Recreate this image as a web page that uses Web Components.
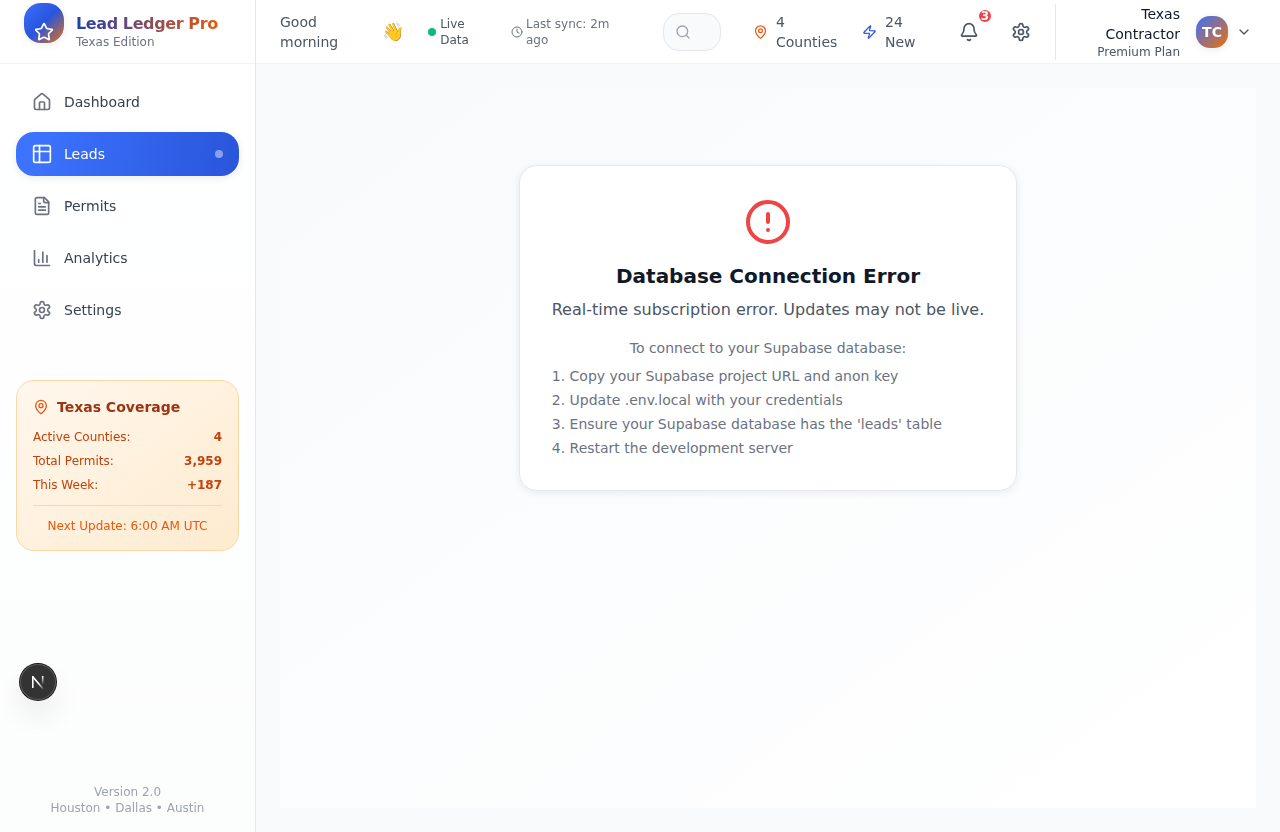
<!DOCTYPE html>
<html lang="en">
<head>
<meta charset="utf-8">
<title>Lead Ledger Pro</title>
<style>
html,body{margin:0;height:100%}
body{font-family:"DejaVu Sans",sans-serif;font-size:14px;line-height:20px;color:#374151;background:#f8fafc;overflow:hidden}
</style>
</head>
<body>
<ledger-app></ledger-app>
<script>
const ICONS = {
  star:'<path d="M11.525 2.295a.53.53 0 0 1 .95 0l2.31 4.679a2.123 2.123 0 0 0 1.595 1.16l5.166.756a.53.53 0 0 1 .294.904l-3.736 3.638a2.123 2.123 0 0 0-.611 1.878l.882 5.14a.53.53 0 0 1-.771.56l-4.618-2.428a2.122 2.122 0 0 0-1.973 0L6.396 21.01a.53.53 0 0 1-.77-.56l.881-5.139a2.122 2.122 0 0 0-.611-1.879L2.16 9.795a.53.53 0 0 1 .294-.906l5.165-.755a2.122 2.122 0 0 0 1.597-1.16z"/>',
  house:'<path d="M15 21v-8a1 1 0 0 0-1-1h-4a1 1 0 0 0-1 1v8"/><path d="M3 10a2 2 0 0 1 .709-1.528l7-5.999a2 2 0 0 1 2.582 0l7 5.999A2 2 0 0 1 21 10v9a2 2 0 0 1-2 2H5a2 2 0 0 1-2-2z"/>',
  table:'<rect width="20" height="20" x="2" y="2" rx="2"/><path d="M2 9h20M9 2v20"/>',
  file:'<path d="M15 2H6a2 2 0 0 0-2 2v16a2 2 0 0 0 2 2h12a2 2 0 0 0 2-2V7Z"/><path d="M14 2v4a2 2 0 0 0 2 2h4M10 9H8M16 13H8M16 17H8"/>',
  chart:'<path d="M3 3v16a2 2 0 0 0 2 2h16M18 17V9M13 17V5M8 17v-3"/>',
  gear:'<path d="M12.22 2h-.44a2 2 0 0 0-2 2v.18a2 2 0 0 1-1 1.73l-.43.25a2 2 0 0 1-2 0l-.15-.08a2 2 0 0 0-2.73.73l-.22.38a2 2 0 0 0 .73 2.73l.15.1a2 2 0 0 1 1 1.72v.51a2 2 0 0 1-1 1.74l-.15.09a2 2 0 0 0-.73 2.73l.22.38a2 2 0 0 0 2.73.73l.15-.08a2 2 0 0 1 2 0l.43.25a2 2 0 0 1 1 1.73V20a2 2 0 0 0 2 2h.44a2 2 0 0 0 2-2v-.18a2 2 0 0 1 1-1.73l.43-.25a2 2 0 0 1 2 0l.15.08a2 2 0 0 0 2.73-.73l.22-.39a2 2 0 0 0-.73-2.73l-.15-.08a2 2 0 0 1-1-1.74v-.5a2 2 0 0 1 1-1.74l.15-.09a2 2 0 0 0 .73-2.73l-.22-.38a2 2 0 0 0-2.73-.73l-.15.08a2 2 0 0 1-2 0l-.43-.25a2 2 0 0 1-1-1.73V4a2 2 0 0 0-2-2z"/><circle cx="12" cy="12" r="3"/>',
  pin:'<path d="M20 10c0 4.993-5.539 10.193-7.399 11.799a1 1 0 0 1-1.202 0C9.539 20.193 4 14.993 4 10a8 8 0 0 1 16 0"/><circle cx="12" cy="10" r="3"/>',
  clock:'<circle cx="12" cy="12" r="10"/><path d="M12 6v6l4 2"/>',
  search:'<circle cx="11" cy="11" r="8"/><path d="m21 21-4.3-4.3"/>',
  zap:'<path d="M4 14a1 1 0 0 1-.78-1.63l9.9-10.2a.5.5 0 0 1 .86.46l-1.92 6.02A1 1 0 0 0 13 10h7a1 1 0 0 1 .78 1.63l-9.9 10.2a.5.5 0 0 1-.86-.46l1.92-6.02A1 1 0 0 0 11 14z"/>',
  bell:'<path d="M10.268 21a2 2 0 0 0 3.464 0M3.262 15.326A1 1 0 0 0 4 17h16a1 1 0 0 0 .74-1.673C19.41 13.956 18 12.499 18 8A6 6 0 0 0 6 8c0 4.499-1.411 5.956-2.738 7.326"/>',
  down:'<path d="m6 9 6 6 6-6"/>',
  alert:'<circle cx="12" cy="12" r="10"/><path d="M12 8v4M12 16h.01"/>'
};

function define(name, css, html) {
  const t = document.createElement('template');
  customElements.define(name, class extends HTMLElement {
    constructor() {
      super();
      t.innerHTML = `<style>*{box-sizing:border-box}:host{box-sizing:border-box}${css}</style>` +
        (typeof html === 'function' ? html(this) : html);
      this.attachShadow({mode:'open'}).append(t.content.cloneNode(true));
    }
  });
}

define('ll-icon', `:host{display:block;flex:none;width:var(--s,20px);height:var(--s,20px)}svg{display:block;width:100%;height:100%}`,
  el => `<svg viewBox="0 0 24 24" fill="none" stroke="currentColor" stroke-width="2" stroke-linecap="round" stroke-linejoin="round">${ICONS[el.getAttribute('name')]}</svg>`);

define('nav-item', `
:host{display:flex;align-items:center;gap:12px;height:44px;padding:0 16px;border-radius:18px;color:#374151}
ll-icon{color:#6b7280}
span{flex:1}
i{display:none;width:8px;height:8px;border-radius:50%;background:#ffffff70}
:host([active]){color:#fff;background:linear-gradient(98deg,#3d74ff 5%,#2955da);box-shadow:0 2px 8px rgba(0,0,0,.08)}
:host([active]) ll-icon{color:#fff}
:host([active]) i{display:block}`,
  el => `<ll-icon name="${el.getAttribute('icon')}"></ll-icon><span><slot></slot></span><i></i>`);

define('brand-bar', `
:host{display:flex;gap:12px;height:64px;padding:3px 24px 0;border-bottom:1px solid #f1f3f5}
.logo{display:grid;place-items:center;padding:18px 0 0;width:40px;height:40px;border-radius:17px;color:#fff;background:linear-gradient(135deg,#3b70ff 0%,#2855dc 50%,#ea6f12 100%);box-shadow:0 2px 8px rgba(0,0,0,.08)}
.logo ll-icon{--s:20px}
.t{padding-top:11px}
b{display:block;width:max-content;font-size:16px;line-height:20px;letter-spacing:-.4px;background:linear-gradient(90deg,#1e40af,#ea580c);-webkit-background-clip:text;background-clip:text;color:transparent}
small{display:block;font-size:12px;line-height:16px;color:#6b7280}`,
  `<div class="logo"><ll-icon name="star"></ll-icon></div><div class="t"><b>Lead Ledger Pro</b><small>Texas Edition</small></div>`);

define('coverage-card', `
:host{display:block;height:171px;padding:16px;border:1px solid #fcd9a4;border-radius:18px;background:linear-gradient(to bottom right,#fff7ed,#feebcf);font-size:12px;line-height:16px;color:#c2410c}
h3{display:flex;align-items:center;gap:8px;margin:0 0 12px;font-size:14px;line-height:20px;color:#9a3412}
ll-icon{--s:16px;color:#ea580c}
div{display:flex;justify-content:space-between;margin-bottom:8px}
p{margin:12px 0 0;padding-top:12px;border-top:1px solid #fcd9a4;text-align:center;color:#ea580c}`,
  `<h3><ll-icon name="pin"></ll-icon>Texas Coverage</h3>
<div><span>Active Counties:</span><b>4</b></div><div><span>Total Permits:</span><b>3,959</b></div><div><span>This Week:</span><b>+187</b></div>
<p>Next Update: 6:00 AM UTC</p>`);

define('side-bar', `
:host{display:flex;flex-direction:column;width:256px;height:100%;border-right:1px solid #e5e7eb;background:linear-gradient(#fff,#fcfdfd);will-change:transform}
nav{display:flex;flex-direction:column;gap:8px;padding:16px}
coverage-card{margin:32px 16px 0}
footer{margin-top:auto;padding-bottom:16px;font-size:12px;line-height:16px;text-align:center;color:#9ca3af}`,
  `<brand-bar></brand-bar><nav><nav-item icon="house">Dashboard</nav-item><nav-item icon="table" active>Leads</nav-item><nav-item icon="file">Permits</nav-item><nav-item icon="chart">Analytics</nav-item><nav-item icon="gear">Settings</nav-item></nav>
<coverage-card></coverage-card><footer>Version 2.0<br>Houston • Dallas • Austin</footer>`);

define('top-bar', `
:host{display:flex;align-items:center;height:64px;padding:0 24px;border-bottom:1px solid #f1f3f5;background:#fff;color:#4b5563;will-change:transform}
:host>*{flex:none}
.hi{width:102px}
.wave{width:46px;font-size:18px;line-height:28px}
.s{display:flex;align-items:center;font-size:12px;line-height:16px}
.live{width:83px;gap:4.2px}.live i{width:8px;height:8px;border-radius:50%;background:#10b981}
.sync{width:152px;gap:3px;color:#6b7280}.sync ll-icon{--s:12px}
.search{display:flex;align-items:center;width:58px;height:38px;padding-left:11px;border:1px solid #e5e7eb;border-radius:16px;background:#f9fafb;color:#9ca3af}
.search ll-icon{--s:16px}
.stat{display:flex;align-items:center;gap:8px}.stat ll-icon{--s:15px;height:16px;color:var(--c)}
.c{margin-left:32px;width:109px;--c:#ea580c}.n{width:97px;--c:#2952e3}
.bell{position:relative}
.bell b{position:absolute;left:20px;top:-12px;width:12px;height:12px;border-radius:6px;background:#ef4444;color:#fff;font-size:12px;line-height:12px;text-align:center}
.gear{margin-left:32px}
.user{display:flex;align-items:center;height:56px;margin-left:24px;border-left:1px solid #e5e7eb}
.who{width:124px;text-align:right;color:#111827}.who small{display:block;font-size:12px;line-height:16px;color:#4b5563}
.av{display:grid;place-items:center;width:32px;height:32px;margin:0 8px 0 16px;border-radius:14px;color:#fff;font-weight:700;background:linear-gradient(135deg,#3b6fff,#ee7008);box-shadow:0 2px 8px rgba(0,0,0,.08)}
.user ll-icon{--s:16px}`,
  `<div class="hi">Good<br>morning</div><div class="wave">👋</div>
<div class="s live"><i></i><span>Live<br>Data</span></div>
<div class="s sync"><ll-icon name="clock"></ll-icon><span>Last sync: 2m<br>ago</span></div>
<div class="search"><ll-icon name="search"></ll-icon></div>
<div class="stat c"><ll-icon name="pin"></ll-icon><span>4<br>Counties</span></div>
<div class="stat n"><ll-icon name="zap"></ll-icon><span>24<br>New</span></div>
<div class="bell"><ll-icon name="bell"></ll-icon><b>3</b></div><ll-icon class="gear" name="gear"></ll-icon>
<div class="user"><div class="who">Texas<br>Contractor<small>Premium Plan</small></div><div class="av">TC</div><ll-icon name="down"></ll-icon></div>`);

define('error-card', `
:host{display:flex;flex-direction:column;align-items:center;width:498px;height:326px;padding:32px;border:1px solid #e5e7eb;border-radius:18px;background:#fff;box-shadow:0 2px 8px rgba(15,23,42,.08);color:#6b7280}
ll-icon{--s:48px;color:#ef4444}
h2{margin:16px 0 8px;font-size:20px;line-height:28px;color:#111827}
p{margin:0;font-size:16px;line-height:24px;color:#4b5563;white-space:nowrap}
.h{margin:16px 0 8px;font-size:14px;line-height:20px;color:#6b7280}
ol{align-self:stretch;display:flex;flex-direction:column;gap:4px;margin:0 0 0 -.27px;padding:0;list-style:none}`,
  `<ll-icon name="alert"></ll-icon><h2>Database Connection Error</h2><p>Real-time subscription error. Updates may not be live.</p><p class="h">To connect to your Supabase database:</p>
<ol><li>1. Copy your Supabase project URL and anon key</li><li>2. Update .env.local with your credentials</li><li>3. Ensure your Supabase database has the 'leads' table</li><li>4. Restart the development server</li></ol>`);

define('dev-badge', `
:host{position:fixed;left:20px;bottom:132px;width:36px;height:36px;border-radius:50%;background:#333;box-shadow:0 0 0 1px #171717,inset 0 0 0 1px #5a5a5a,0 16px 32px -8px rgba(0,0,0,.24)}
svg{display:block}`,
  `<svg width="36" height="36" viewBox="0 0 36 36" fill="none" stroke-width="1.6"><defs><linearGradient id="a" gradientUnits="userSpaceOnUse" x1="0" y1="12" x2="0" y2="21"><stop stop-color="#fff"/><stop offset="1" stop-color="#fff" stop-opacity="0"/></linearGradient><linearGradient id="b" gradientUnits="userSpaceOnUse" x1="17" y1="17" x2="23.5" y2="25"><stop offset=".3" stop-color="#fff"/><stop offset="1" stop-color="#fff" stop-opacity=".1"/></linearGradient></defs><path d="M12.8 24V12" stroke="#fff"/><path d="M12.6 12.4 23.2 25" stroke="url(#b)"/><path d="M22.7 12v9" stroke="url(#a)"/></svg>`);

define('ledger-app', `
:host{display:grid;grid-template-columns:256px 1fr;height:100vh}
section{display:flex;flex-direction:column;min-width:0}
main{flex:1;padding:24px}
.stage{display:flex;justify-content:center;align-items:flex-start;height:720px;padding-top:77px;background:linear-gradient(to bottom right,#f8fafc,#fff)}`,
  `<side-bar></side-bar><section><top-bar></top-bar><main><div class="stage"><error-card></error-card></div></main></section><dev-badge></dev-badge>`);
</script>
</body>
</html>
